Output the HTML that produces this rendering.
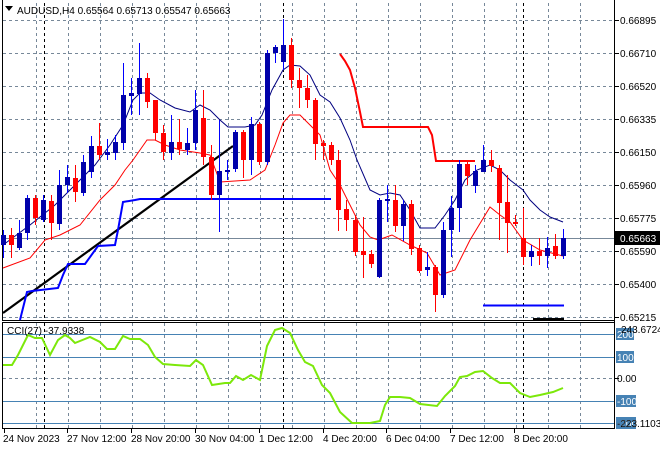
<!DOCTYPE html><html><head><meta charset="utf-8"><style>body{margin:0;background:#fff}svg{display:block}text{font-family:"Liberation Sans",sans-serif;font-size:10px}</style></head><body>
<svg width="660" height="450" viewBox="0 0 660 450" xmlns="http://www.w3.org/2000/svg" shape-rendering="crispEdges">
<rect width="660" height="450" fill="#fff"/>
<g stroke="#778899" stroke-dasharray="3,3" stroke-width="1">
<path d="M3 20.5H615M3 53.5H615M3 86.5H615M3 119.5H615M3 152.5H615M3 185.5H615M3 218.5H615M3 251.5H615M3 284.5H615M3 317.5H615M3 378.5H615"/>
<path d="M36.5 3V320M68.5 3V320M100.5 3V320M132.5 3V320M164.5 3V320M196.5 3V320M228.5 3V320M260.5 3V320M292.5 3V320M324.5 3V320M356.5 3V320M388.5 3V320M420.5 3V320M452.5 3V320M484.5 3V320M516.5 3V320M548.5 3V320M580.5 3V320"/>
<path d="M36.5 323V428M68.5 323V428M100.5 323V428M132.5 323V428M164.5 323V428M196.5 323V428M228.5 323V428M260.5 323V428M292.5 323V428M324.5 323V428M356.5 323V428M388.5 323V428M420.5 323V428M452.5 323V428M484.5 323V428M516.5 323V428M548.5 323V428M580.5 323V428"/>
</g>
<g stroke="#000" stroke-dasharray="3,3"><path d="M44.5 3V320M283.5 3V320M523.5 3V320M44.5 323V428M283.5 323V428M523.5 323V428"/></g>
<path d="M3 238.5H615" stroke="#778899"/>
<g stroke="#4682b4"><path d="M3 334.5H615M3 357.5H615M3 401.5H615M3 423.5H615"/></g>
<path d="M2.5 0V320M2.5 322V429M614.5 0V429M2 320.5H615M2 322.5H615M2 428.5H615" stroke="#000"/>
<g stroke="#000"><path d="M4.5 429V433M67.5 429V433M131.5 429V433M195.5 429V433M259.5 429V433M323.5 429V433M386.5 429V433M450.5 429V433M514.5 429V433M615 20.5H619M615 53.5H619M615 86.5H619M615 119.5H619M615 152.5H619M615 185.5H619M615 218.5H619M615 251.5H619M615 284.5H619M615 317.5H619M615 378.5H619"/></g>
<g shape-rendering="auto" fill="none">
<path d="M3 313L233 146" stroke="#000" stroke-width="2.2"/>
<path d="M20 320L27 292L32 291L58 288L63 275L68 264L85 264L98 246L115 245L118 230L123 202L135 200L140 199L331 199" stroke="#0000ff" stroke-width="2"/>
<path d="M483 305.5H564" stroke="#0000ff" stroke-width="2"/>
<path d="M533 319H564" stroke="#000" stroke-width="2"/>
<path d="M340 54L345 61L350 70L355 88L360 112L363 127L428 127L432 135L436 161L475 161" stroke="#ff0000" stroke-width="2"/>
<path d="M3 245L30 225L55 205L75 185L95 165L110 145L123 125L133 100L140 93L150 93L160 100L175 108L190 112L200 105L210 110L220 120L228 127L245 127L255 125L262 115L272 90L283 70L290 65L300 66L310 75L320 95L330 102L340 118L350 140L357 160L370 190L380 195L390 193L400 195L410 210L420 228L435 228L445 215L455 200L465 180L477 170L490 165L500 170L510 180L523 190L530 200L540 210L550 217L563 222" stroke="#000080" stroke-width="1"/>
<path d="M3 268L30 258L45 240L60 235L80 225L100 200L115 185L125 170L133 160L147 140L155 140L165 145L180 150L200 153L210 155L220 182L250 180L265 170L275 145L283 123L290 115L300 115L310 125L320 135L330 170L340 185L350 205L360 225L370 237L378 240L392 235L410 245L427 253L440 275L455 270L470 240L490 207L500 215L510 222L523 240L540 250L563 256" stroke="#ff0000" stroke-width="1"/>
<path d="M3 365L12 365L18 355L28 335L35 338L42 338L50 355L58 340L65 335L70 338L75 343L90 337L100 342L107 349L115 349L123 336L130 339L140 339L148 345L155 357L163 364L175 365L190 366L196 360L203 365L212 385L225 383L230 383L236 376L243 380L251 375L260 380L267 346L275 330L282 328L290 333L298 350L305 362L313 366L322 385L330 393L340 412L352 423L370 423L380 421L385 405L390 397L400 397L410 398L420 404L437 406L445 396L455 386L460 377L467 376L475 372L483 371L492 378L500 383L510 383L520 393L530 397L540 395L553 392L563 388" stroke="#7ce80a" stroke-width="2"/>
</g>
<g id="c">
<path stroke="#0000ff" d="M3.5 230V258M19.5 220V250M27.5 195V240M43.5 195V222M59.5 170V230M67.5 165V193M83.5 155V196M91.5 136V178M107.5 139V160M115.5 135V160M123.5 63V150M131.5 78V115M139.5 43V115M171.5 115V160M187.5 128V155M195.5 90V150M219.5 120V232M227.5 160V180M235.5 130V172M251.5 117V175M267.5 50V165M275.5 45V63M283.5 19V70M379.5 198V278M387.5 185V222M403.5 200V241M427.5 252V276M443.5 222V298M451.5 196V257M459.5 160V232M475.5 165V193M483.5 145V172M531.5 245V266M547.5 237V268M563.5 229V259"/>
<path stroke="#ff0000" d="M11.5 228V258M35.5 195V225M51.5 195V240M75.5 165V202M99.5 123V160M147.5 73V108M155.5 100V140M163.5 125V160M179.5 119V155M203.5 90V165M211.5 145V200M243.5 130V178M259.5 122V165M291.5 38V88M299.5 68V108M307.5 75V108M315.5 98V160M323.5 140V160M331.5 142V165M338.5 150V231M346.5 200V231M355.5 215V256M363.5 217V278M371.5 250V268M395.5 185V232M411.5 200V255M419.5 245V273M435.5 265V312M467.5 160V185M491.5 150V172M499.5 165V240M507.5 175V253M515.5 215V226M523.5 208V265M539.5 238V265M555.5 234V259"/>
<g fill="#0000aa">
<rect x="1" y="235" width="5" height="10"/><rect x="17" y="233" width="5" height="15"/><rect x="25" y="198" width="5" height="35"/><rect x="41" y="200" width="5" height="20"/><rect x="57" y="185" width="5" height="39"/><rect x="65" y="177" width="5" height="8"/><rect x="81" y="162" width="5" height="31"/><rect x="89" y="146" width="5" height="26"/><rect x="105" y="152" width="5" height="3"/><rect x="113" y="142" width="5" height="11"/><rect x="121" y="95" width="5" height="48"/><rect x="129" y="93" width="5" height="3"/><rect x="137" y="78" width="5" height="16"/><rect x="169" y="142" width="5" height="11"/><rect x="185" y="143" width="5" height="7"/><rect x="193" y="110" width="5" height="33"/><rect x="217" y="171" width="5" height="24"/><rect x="225" y="170" width="5" height="2"/><rect x="233" y="132" width="5" height="37"/><rect x="249" y="124" width="5" height="36"/><rect x="265" y="53" width="5" height="109"/><rect x="273" y="47" width="5" height="6"/><rect x="281" y="45" width="5" height="17"/><rect x="377" y="200" width="5" height="77"/><rect x="385" y="199" width="5" height="2"/><rect x="401" y="204" width="5" height="22"/><rect x="425" y="267" width="5" height="3"/><rect x="441" y="230" width="5" height="65"/><rect x="449" y="208" width="5" height="22"/><rect x="457" y="164" width="5" height="44"/><rect x="473" y="171" width="5" height="15"/><rect x="481" y="160" width="5" height="12"/><rect x="529" y="251" width="5" height="6"/><rect x="545" y="248" width="5" height="8"/><rect x="561" y="238" width="5" height="18"/>
</g>
<g fill="#ff0000">
<rect x="9" y="235" width="5" height="10"/><rect x="33" y="198" width="5" height="20"/><rect x="49" y="201" width="5" height="22"/><rect x="73" y="178" width="5" height="14"/><rect x="97" y="146" width="5" height="9"/><rect x="145" y="78" width="5" height="24"/><rect x="153" y="100" width="5" height="33"/><rect x="161" y="133" width="5" height="19"/><rect x="177" y="142" width="5" height="7"/><rect x="201" y="118" width="5" height="39"/><rect x="209" y="157" width="5" height="38"/><rect x="241" y="132" width="5" height="28"/><rect x="257" y="124" width="5" height="38"/><rect x="289" y="45" width="5" height="35"/><rect x="297" y="80" width="5" height="8"/><rect x="305" y="88" width="5" height="12"/><rect x="313" y="100" width="5" height="44"/><rect x="321" y="143" width="5" height="3"/><rect x="329" y="145" width="5" height="15"/><rect x="336" y="160" width="5" height="50"/><rect x="344" y="209" width="5" height="11"/><rect x="353" y="220" width="5" height="32"/><rect x="361" y="251" width="5" height="4"/><rect x="369" y="254" width="5" height="10"/><rect x="393" y="200" width="5" height="26"/><rect x="409" y="204" width="5" height="45"/><rect x="417" y="248" width="5" height="23"/><rect x="433" y="267" width="5" height="28"/><rect x="465" y="164" width="5" height="12"/><rect x="489" y="160" width="5" height="6"/><rect x="497" y="168" width="5" height="35"/><rect x="505" y="202" width="5" height="21"/><rect x="513" y="222" width="5" height="2"/><rect x="521" y="238" width="5" height="19"/><rect x="537" y="251" width="5" height="5"/><rect x="553" y="246" width="5" height="10"/>
</g>
</g>
<rect x="615" y="231" width="45" height="14" fill="#000"/>
<g fill="#4682b4"><rect x="616" y="328" width="18" height="12"/><rect x="616" y="351" width="18" height="12"/><rect x="616" y="395" width="20" height="12"/><rect x="616" y="417" width="20" height="12"/></g>
<g fill="#000" shape-rendering="auto">
<path d="M5 6H13L9 11Z"/>
<text x="17" y="14">AUDUSD,H4 0.65564 0.65713 0.65547 0.65663</text>
<text x="620" y="24">0.66895</text><text x="620" y="57">0.66710</text><text x="620" y="90">0.66520</text><text x="620" y="123">0.66335</text><text x="620" y="156">0.66150</text><text x="620" y="189">0.65960</text><text x="620" y="222">0.65775</text><text x="620" y="255">0.65590</text><text x="620" y="288">0.65400</text><text x="620" y="321">0.65215</text>
<text x="620" y="242" fill="#fff">0.65663</text>
<text x="617" y="338" fill="#fff">200</text><text x="617" y="361" fill="#fff">100</text><text x="617" y="382">0.00</text><text x="617" y="405" fill="#fff">-100</text><text x="617" y="427" fill="#fff">-200</text>
<text x="621" y="333">243.6724</text><text x="617" y="427">-223.1103</text>
<text x="7" y="334">CCI(27) -37.9338</text>
<text x="3" y="442">24 Nov 2023</text><text x="67" y="442">27 Nov 12:00</text><text x="131" y="442">28 Nov 20:00</text><text x="195" y="442">30 Nov 04:00</text><text x="259" y="442">1 Dec 12:00</text><text x="323" y="442">4 Dec 20:00</text><text x="386" y="442">6 Dec 04:00</text><text x="450" y="442">7 Dec 12:00</text><text x="514" y="442">8 Dec 20:00</text>
</g>
</svg>
</body></html>
